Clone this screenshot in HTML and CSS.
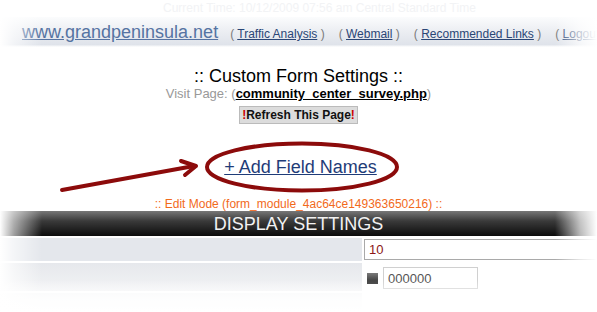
FILE: index.html
```html
<!DOCTYPE html>
<html lang="en">
<head>
  <meta charset="UTF-8">
  <title>Custom Form Settings</title>
  <link rel="stylesheet" href="styles.css">
</head>
<body>
  <div class="page">
    <div class="clock">Current Time: 10/12/2009 07:56 am Central Standard Time</div>
    <div class="topbar">
      <a class="site" href="#">www.grandpeninsula.net</a>
      <span class="nav">( <a href="#">Traffic Analysis</a> )</span>
      <span class="nav">( <a href="#">Webmail</a> )</span>
      <span class="nav">( <a href="#">Recommended Links</a> )</span>
      <span class="nav">( <a href="#">Logout</a> )</span>
    </div>

    <div class="heading">
      <h1>:: Custom Form Settings ::</h1>
      <p class="visit">Visit Page: (<a href="#">community_center_survey.php</a>)</p>
      <button type="button" class="refresh"><span class="bang">!</span>Refresh This Page<span class="bang">!</span></button>
    </div>

    <div class="add-fields">
      <a href="#">+ Add Field Names</a>
    </div>
    <p class="edit-mode">:: Edit Mode (form_module_4ac64ce149363650216) ::</p>

    <div class="settings">
      <div class="settings-head">DISPLAY SETTINGS</div>
      <div class="row">
        <div class="label"></div>
        <div class="value"><input type="text" class="wide" value="10"></div>
      </div>
      <div class="row row-alt">
        <div class="label"></div>
        <div class="value"><span class="swatch"></span><input type="text" class="short" value="000000"></div>
      </div>
      <div class="row row-faint">
        <div class="label"></div>
        <div class="value"></div>
      </div>
    </div>

    <!-- hand drawn annotation on top of the screenshot -->
    <svg class="markup" width="597" height="312" viewBox="0 0 597 312">
      <ellipse cx="302" cy="167" rx="95" ry="23.5" fill="none" stroke="#8c0b0b" stroke-width="4"/>
      <path d="M62 190 L194 166" fill="none" stroke="#8c0b0b" stroke-width="4" stroke-linecap="round"/>
      <path d="M181 161 L196 166 L185 175" fill="none" stroke="#8c0b0b" stroke-width="4" stroke-linecap="round" stroke-linejoin="round"/>
    </svg>

    <div class="fade"></div>
  </div>
</body>
</html>
```

FILE: styles.css
```css
body {
  margin: 0;
  background: #fff;
  font-family: "Liberation Sans", Arial, sans-serif;
}
.page {
  position: relative;
  width: 597px;
  height: 312px;
  overflow: hidden;
}
.clock {
  height: 17px;
  padding-left: 163px;
  font-size: 12px;
  line-height: 17px;
  color: #f2f3f5;
}
.topbar {
  display: flex;
  align-items: baseline;
  gap: 14px;
  height: 30px;
  padding-left: 22px;
  white-space: nowrap;
  background: linear-gradient(to bottom, #fbfcfd 0, #eef0f4 40%, #dfe3ea 92%, #fff 100%);
}
.site {
  margin-right: -2px;
  font-size: 18px;
  line-height: 30px;
  color: #5573a2;
}
.nav {
  font-size: 12px;
  color: #7a7a7a;
}
.nav a {
  color: #2a4676;
}
.heading {
  text-align: center;
  padding-top: 19px;
}
h1 {
  margin: 0;
  font-size: 18px;
  font-weight: normal;
  line-height: 20px;
  color: #000;
}
.visit {
  margin: 0;
  font-size: 13px;
  line-height: 16px;
  color: #999;
}
.visit a {
  color: #000;
  font-weight: bold;
}
.refresh {
  margin-top: 4px;
  padding: 1px 2px;
  font-family: "Liberation Sans", Arial, sans-serif;
  font-size: 12px;
  font-weight: bold;
  color: #111;
  background: #dcdcdc;
  border: 1px solid #bbb;
}
.bang {
  color: #cc0000;
}
.add-fields {
  text-align: center;
  padding-top: 32px;
  padding-left: 4px;
}
.add-fields a {
  font-size: 18px;
  line-height: 22px;
  color: #1f3c78;
}
.edit-mode {
  margin: 19px 0 0;
  text-align: center;
  font-size: 12px;
  line-height: 14px;
  color: #f26a1b;
}
.settings-head {
  height: 25px;
  line-height: 27px;
  text-align: center;
  font-size: 18px;
  color: #f2f2f2;
  background: linear-gradient(to bottom, #777 0, #3a3a3a 40%, #0c0c0c 100%);
}
.row {
  display: flex;
  border-top: 2px solid #fff;
}
.label {
  width: 362px;
  background: #e4e7ec;
}
.value {
  flex: 1;
  display: flex;
  align-items: center;
  padding: 1px 0 1px 2px;
}
.wide {
  width: 100%;
  height: 21px;
  box-sizing: border-box;
  border: 1px solid #a9a9a9;
  padding: 0 4px;
  font-family: "Liberation Sans", Arial, sans-serif;
  font-size: 13px;
  color: #8c1616;
}
.row-alt .label {
  background: linear-gradient(to bottom, #e6e8ec 0, #f2f3f5 100%);
}
.row-alt .value {
  padding: 4px 0 2px 5px;
  gap: 5px;
}
.swatch {
  width: 11px;
  height: 11px;
  background: linear-gradient(to bottom, #7a7a7a, #2a2a2a);
}
.short {
  width: 95px;
  height: 22px;
  box-sizing: border-box;
  border: 1px solid #d0d0d0;
  padding: 0 4px;
  font-family: "Liberation Sans", Arial, sans-serif;
  font-size: 13px;
  color: #555;
}
.row-faint {
  height: 24px;
}
.row-faint .label {
  background: #f6f7f8;
}
.markup {
  position: absolute;
  left: 0;
  top: 0;
  pointer-events: none;
}
.fade {
  position: absolute;
  inset: 0;
  pointer-events: none;
  background:
    linear-gradient(to bottom, rgba(255,255,255,0) 280px, rgba(255,255,255,0.85) 300px, #fff 312px),
    linear-gradient(to right, #fff 0, rgba(255,255,255,0.6) 14px, rgba(255,255,255,0) 42px, rgba(255,255,255,0) 555px, rgba(255,255,255,0.7) 580px, #fff 597px);
}
```
